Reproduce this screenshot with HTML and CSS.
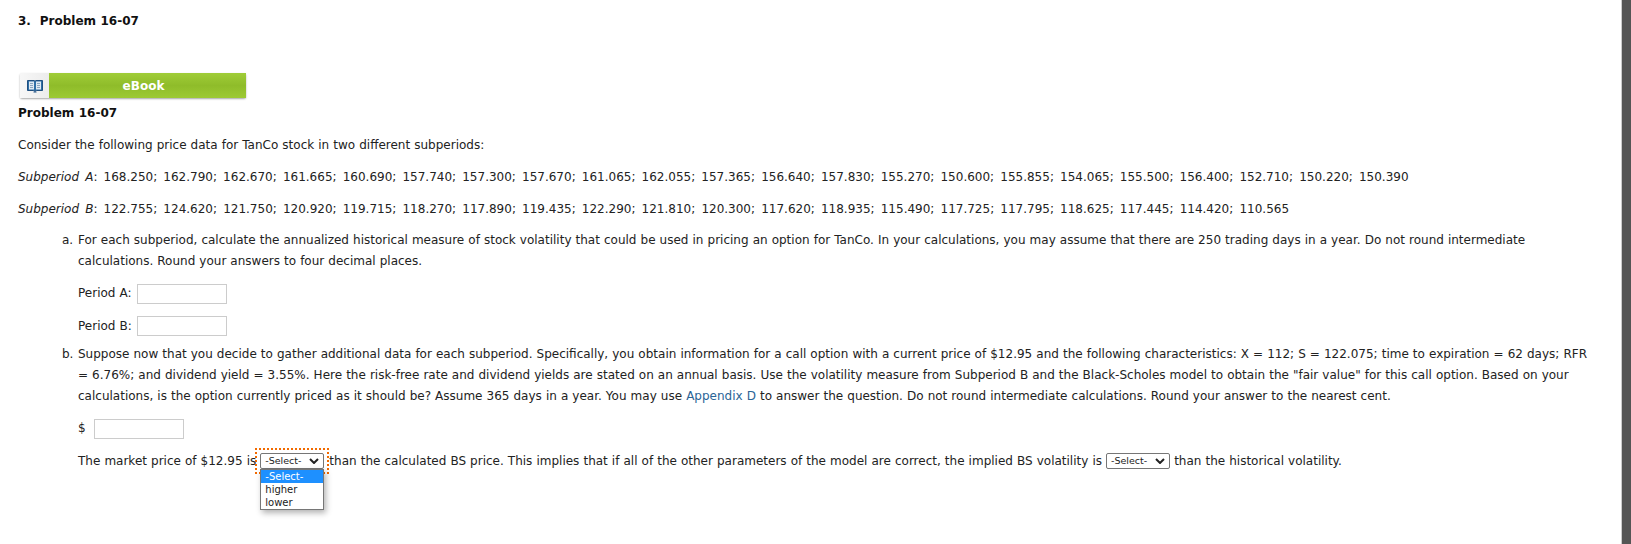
FILE: index.html
```html
<!DOCTYPE html>
<html lang="en">
<head>
    <meta charset="UTF-8">
    <title>Problem 16-07</title>
    <link rel="stylesheet" href="styles.css">
</head>
<body>
    <div class="page">
        <h2 class="title">3.&nbsp; Problem 16-07</h2>
        <div class="ebook">
            <span class="ebook-icon">
                <svg width="16" height="14" viewBox="0 0 16 14">
                    <path d="M.5 1.500h6.500l1 .7 1-.7h6.500v10h-6l-1.500.8-1.500-.8h-6z" fill="#2f6fa6" stroke="#1f4f80"/>
                    <path d="M2 2.500h5v8H2zM9 2.500h5v8H9z" fill="#dfe9f2"/>
                    <path d="M3 4.500h3M3 6.500h3M3 8.500h3M10 4.500h3M10 6.500h3M10 8.500h3" stroke="#8aa6bf"/>
                    <path d="M6.500 12.500h3v1h-3z" fill="#1f4f80"/>
                </svg>
            </span>
            <span class="ebook-label">eBook</span>
        </div>
        <h3 class="subtitle">Problem 16-07</h3>
        <p class="row">Consider the following price data for TanCo stock in two different subperiods:</p>
        <p class="row row-data"><i>Subperiod A</i>: 168.250; 162.790; 162.670; 161.665; 160.690; 157.740; 157.300; 157.670; 161.065; 162.055; 157.365; 156.640; 157.830; 155.270; 150.600; 155.855; 154.065; 155.500; 156.400; 152.710; 150.220; 150.390</p>
        <p class="row row-data"><i>Subperiod B</i>: 122.755; 124.620; 121.750; 120.920; 119.715; 118.270; 117.890; 119.435; 122.290; 121.810; 120.300; 117.620; 118.935; 115.490; 117.725; 117.795; 118.625; 117.445; 114.420; 110.565</p>

        <div class="part">
            <span class="part-mark">a.</span>
            <p class="part-text">For each subperiod, calculate the annualized historical measure of stock volatility that could be used in pricing an option for TanCo. In your calculations, you may assume that there are 250 trading days in a year. Do not round intermediate calculations. Round your answers to four decimal places.</p>
        </div>
        <div class="field field-first">Period A: <input class="answer" type="text"></div>
        <div class="field">Period B: <input class="answer" type="text"></div>

        <div class="part part-b">
            <span class="part-mark">b.</span>
            <p class="part-text">Suppose now that you decide to gather additional data for each subperiod. Specifically, you obtain information for a call option with a current price of $12.95 and the following characteristics: X = 112; S = 122.075; time to expiration = 62 days; RFR = 6.76%; and dividend yield = 3.55%. Here the risk-free rate and dividend yields are stated on an annual basis. Use the volatility measure from Subperiod B and the Black-Scholes model to obtain the "fair value" for this call option. Based on your calculations, is the option currently priced as it should be? Assume 365 days in a year. You may use <a href="#">Appendix D</a> to answer the question. Do not round intermediate calculations. Round your answer to the nearest cent.</p>
        </div>
        <div class="field field-cash">$ <input class="answer" type="text"></div>

        <div class="sentence">
            The market price of $12.95 is
            <span class="select-wrap">
                <span class="pick">-Select-<svg class="pick-arrow" width="10" height="6" viewBox="0 0 10 6"><path d="M1 1l4 4 4-4" fill="none" stroke="#222" stroke-width="2"/></svg></span>
                <span class="menu">
                    <span class="menu-item menu-item-on">-Select-</span>
                    <span class="menu-item">higher</span>
                    <span class="menu-item">lower</span>
                </span>
            </span>
            than the calculated BS price. This implies that if all of the other parameters of the model are correct, the implied BS volatility is
            <span class="pick">-Select-<svg class="pick-arrow" width="10" height="6" viewBox="0 0 10 6"><path d="M1 1l4 4 4-4" fill="none" stroke="#222" stroke-width="2"/></svg></span>
            than the historical volatility.
        </div>
    </div>
    <div class="scrollbar"></div>
</body>
</html>
```

FILE: styles.css
```css
html, body {
    height: 100%;
}

body {
    margin: 0;
    display: flex;
    overflow: hidden;
    font-family: Verdana, "DejaVu Sans", sans-serif;
    font-size: 12px;
    color: #222;
    background-color: #fff;
}

.page {
    flex: 1;
    min-width: 0;
    padding: 14px 30px 0 18px;
    word-spacing: 0.25px;
}

.scrollbar {
    width: 9px;
    background-color: #555;
    border-left: 1px solid #ccc;
}

.title, .subtitle {
    margin: 0;
    font-size: 12px;
    line-height: 14px;
    font-weight: bold;
    color: #111;
}

.ebook {
    display: flex;
    width: 226px;
    height: 25px;
    margin: 45px 0 0 2px;
    border-radius: 2px;
    box-shadow: 0 1px 2px rgba(0, 0, 0, 0.35);
}

.ebook-icon {
    display: flex;
    align-items: center;
    justify-content: center;
    width: 29px;
    background: linear-gradient(90deg, #f7f7f7, #ececec);
}

.ebook-label {
    flex: 1;
    padding-right: 8px;
    text-align: center;
    line-height: 27px;
    font-weight: bold;
    font-size: 12px;
    color: #fff;
    background: linear-gradient(#a0cd38, #8fbc2a 50%, #9dca34);
}

.subtitle {
    margin-top: 8px;
}

.row {
    margin: 18px 0 0;
    line-height: 14px;
}

.row-data {
    word-spacing: 2.3px;
}

.part {
    display: flex;
    margin-top: 14px;
    line-height: 21px;
}

.part-mark {
    width: 16px;
    margin-left: 44px;
    flex-shrink: 0;
}

.part-text {
    margin: 0;
}

.part-b {
    margin-top: 8px;
}

a {
    color: #2a6496;
    text-decoration: none;
}

.field {
    margin: 12px 0 0 60px;
    line-height: 20px;
}

.field-first {
    margin-top: 11px;
}

.field-cash {
    margin-top: 11px;
}

.answer {
    width: 88px;
    height: 18px;
    margin-left: 1px;
    padding: 0;
    border: 1px solid #ccc;
    vertical-align: middle;
    box-sizing: content-box;
}

.field-cash .answer {
    margin-left: 4px;
}

.sentence {
    margin: 12px 0 0 60px;
    line-height: 20px;
}

.select-wrap {
    position: relative;
    display: inline-block;
    margin-right: 1px;
    outline: 2px dotted #f26a00;
    outline-offset: 3px;
    line-height: 0;
}

.pick {
    display: inline-flex;
    align-items: center;
    justify-content: space-between;
    width: 64px;
    height: 16px;
    padding: 0 4px;
    box-sizing: border-box;
    font-size: 9.500px;
    line-height: 14px;
    word-spacing: 0;
    color: #222;
    background-color: #fff;
    border: 1px solid #767676;
    border-radius: 2px;
    vertical-align: middle;
}

.menu {
    position: absolute;
    top: 16px;
    left: 0;
    width: 62px;
    background-color: #fff;
    border: 1px solid #767676;
    box-shadow: 2px 3px 6px rgba(0, 0, 0, 0.3);
}

.menu-item {
    display: block;
    height: 13px;
    line-height: 13px;
    padding-left: 4px;
    font-size: 10px;
}

.menu-item-on {
    color: #fff;
    background-color: #1e90ff;
}
```
